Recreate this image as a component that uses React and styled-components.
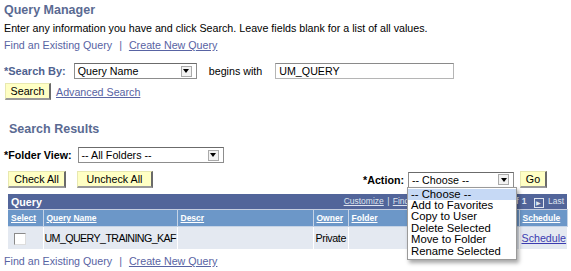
import React from "react";
import styled, { createGlobalStyle } from "styled-components";

const Global = createGlobalStyle`
  html, body { margin: 0; padding: 0; background: #fff; }
  body { font-family: "Liberation Sans", Arial, sans-serif; color: #000; }
`;

const Page = styled.div`
  width: 571px;
  height: 271px;
  overflow: hidden;
  padding: 0 0 0 4px;
  box-sizing: border-box;
  position: relative;
`;

const Title = styled.div`
  font-size: 12.5px;
  font-weight: bold;
  color: #5a6a92;
  line-height: 16px;
  margin-top: ${(p) => p.$mt || 2}px;
  padding-left: ${(p) => p.$indent || 0}px;
`;

const Text = styled.div`
  font-size: 10.7px;
  line-height: 14px;
  margin-top: 3px;
`;

const LinkRow = styled.div`
  font-size: 10.7px;
  line-height: 14px;
  margin-top: ${(p) => p.$mt}px;
  color: #5863a3;
  display: flex;
  gap: 7px;
`;

const Link = styled.span`
  color: #5863a3;
  text-decoration: ${(p) => (p.$u ? "underline" : "none")};
`;

const Row = styled.div`
  display: flex;
  align-items: center;
  margin-top: ${(p) => p.$mt}px;
  padding-left: ${(p) => p.$pl || 0}px;
  position: relative;
  z-index: ${(p) => p.$z || 0};
`;

const Label = styled.span`
  font-size: ${(p) => p.$size || 10.7}px;
  font-weight: bold;
  color: ${(p) => p.$color || "#000"};
  margin-right: ${(p) => p.$mr}px;
`;

const Select = styled.div`
  width: ${(p) => p.$w}px;
  height: 14px;
  border: 1px solid #8d8d8d;
  border-top-color: #6b6b6b;
  background: #fff;
  box-sizing: content-box;
  display: flex;
  align-items: center;
  font-size: 10.7px;
  padding-left: 3px;
  position: relative;
`;

const SelectText = styled.span`
  flex: 1;
  line-height: 14px;
`;

const Arrow = styled.span`
  width: 9px;
  height: 9px;
  margin-right: 4px;
  border: 1px solid #aaa;
  background: #f2f2f2;
  display: flex;
  align-items: center;
  justify-content: center;
  &::after {
    content: "";
    border-left: 3px solid transparent;
    border-right: 3px solid transparent;
    border-top: 4px solid #000;
  }
`;

const Plain = styled.span`
  font-size: 10.7px;
  margin: 0 ${(p) => p.$mr}px 0 ${(p) => p.$ml}px;
`;

const Input = styled.div`
  width: 174px;
  height: 14px;
  border: 1px solid #b5b5b5;
  border-top-color: #8a8a8a;
  font-size: 10.7px;
  line-height: 14px;
  padding-left: 3px;
`;

const Button = styled.div`
  width: ${(p) => p.$w}px;
  height: 14px;
  background: #ffffc4;
  border: 1px solid #e8e8b0;
  border-right: 2px solid #6a6a6a;
  border-bottom: 2px solid #9a9a9a;
  font-size: 10.7px;
  line-height: 14px;
  text-align: center;
  margin-right: ${(p) => p.$mr || 0}px;
  margin-left: ${(p) => p.$ml || 0}px;
`;

const Spacer = styled.div`
  flex: 1;
`;

const ActionWrap = styled.div`
  position: relative;
`;

const Dropdown = styled.div`
  position: absolute;
  left: -1px;
  top: 15px;
  width: 108px;
  background: #fff;
  border: 1px solid #9a9a9a;
  box-shadow: 2px 3px 4px rgba(0, 0, 0, 0.35);
  z-index: 5;
  padding: 1px 0 2px;
`;

const Option = styled.div`
  font-size: 11.3px;
  line-height: 11.4px;
  padding-left: 3px;
  background: ${(p) => (p.$sel ? "#c6d9f5" : "transparent")};
`;

const Table = styled.table`
  margin-top: 6px;
  margin-left: 4px;
  width: 559px;
  border-collapse: collapse;
  table-layout: fixed;
  font-size: 10.7px;
`;

const TitleCell = styled.td`
  background: #52659a;
  color: #fff;
  font-weight: bold;
  font-size: 10.7px;
  height: 15px;
  padding: 0 3px;
  border-bottom: 1px solid #c5cde0;
`;

const NavText = styled.span`
  float: right;
  font-size: 8.5px;
  font-weight: normal;
  color: #dfe4ef;
  word-spacing: 1px;
`;

const NavLink = styled.span`
  text-decoration: underline;
`;

const NavIcon = styled.span`
  display: inline-block;
  width: 8px;
  height: 8px;
  border: 1px solid #dfe4ef;
  margin: 0 4px;
  vertical-align: -1px;
  font-size: 6px;
  line-height: 8px;
  text-align: center;
`;

const Th = styled.th`
  background: #6c97c8;
  color: #fff;
  font-size: 8.5px;
  font-weight: bold;
  text-align: left;
  text-decoration: underline;
  height: 16px;
  padding: 0 3px;
  border-right: 1px solid #c5d3e6;
  border-bottom: 1px solid #c5d3e6;
  white-space: nowrap;
  overflow: hidden;
`;

const Td = styled.td`
  background: #e4e9f1;
  height: 22px;
  padding: 0 ${(p) => p.$pad ?? 3}px;
  font-size: 10.7px;
  letter-spacing: ${(p) => p.$ls || 0}px;
  border-right: 1px solid #fff;
  white-space: nowrap;
  overflow: hidden;
  color: ${(p) => p.$color || "#000"};
`;

const Check = styled.span`
  display: inline-block;
  width: 10px;
  height: 10px;
  margin-left: 3px;
  border: 1px solid #8a8a8a;
  border-right-color: #ddd;
  border-bottom-color: #ddd;
  background: #fff;
  vertical-align: middle;
`;

export default function App() {
  return (
    <>
      <Global />
      <Page>
        <Title>Query Manager</Title>
        <Text>Enter any information you have and click Search. Leave fields blank for a list of all values.</Text>
        <LinkRow $mt={3}>
          <Link>Find an Existing Query</Link>
          <span>|</span>
          <Link $u>Create New Query</Link>
        </LinkRow>
        <Row $mt={11}>
          <Label $size={11} $color="#4f628f" $mr={8}>*Search By:</Label>
          <Select $w={118}>
            <SelectText>Query Name</SelectText>
            <Arrow />
          </Select>
          <Plain $ml={12} $mr={13}>begins with</Plain>
          <Input>UM_QUERY</Input>
        </Row>
        <Row $mt={4} $pl={1}>
          <Button $w={43}>Search</Button>
          <Plain $ml={5} $mr={0}>
            <Link $u>Advanced Search</Link>
          </Plain>
        </Row>
        <Title $indent={5} $mt={21}>Search Results</Title>
        <Row $mt={10}>
          <Label $mr={6}>*Folder View:</Label>
          <Select $w={141}>
            <SelectText>-- All Folders --</SelectText>
            <Arrow />
          </Select>
        </Row>
        <Row $mt={8} $pl={4} $z={3}>
          <Button $w={55} $mr={11}>Check All</Button>
          <Button $w={73}>Uncheck All</Button>
          <Spacer />
          <Label $mr={4}>*Action:</Label>
          <ActionWrap>
            <Select $w={101}>
              <SelectText>-- Choose --</SelectText>
              <Arrow />
            </Select>
            <Dropdown>
              <Option $sel>-- Choose --</Option>
              <Option>Add to Favorites</Option>
              <Option>Copy to User</Option>
              <Option>Delete Selected</Option>
              <Option>Move to Folder</Option>
              <Option>Rename Selected</Option>
            </Dropdown>
          </ActionWrap>
          <Button $w={24} $ml={6} $mr={24}>Go</Button>
        </Row>
        <Table>
          <colgroup>
            <col style={{ width: 35 }} />
            <col style={{ width: 134 }} />
            <col style={{ width: 136 }} />
            <col style={{ width: 35 }} />
            <col style={{ width: 83 }} />
            <col style={{ width: 44 }} />
            <col style={{ width: 44 }} />
            <col style={{ width: 48 }} />
          </colgroup>
          <tbody>
            <tr>
              <TitleCell colSpan={8}>
                Query
                <NavText>
                  <NavLink>Customize</NavLink> | <NavLink>Find</NavLink> | <NavLink>View All</NavLink> |
                  &nbsp;&nbsp;First <NavIcon>◀</NavIcon><b>1 of 1</b> <NavIcon>▶</NavIcon>Last
                </NavText>
              </TitleCell>
            </tr>
            <tr>
              <Th>Select</Th>
              <Th>Query Name</Th>
              <Th>Descr</Th>
              <Th>Owner</Th>
              <Th>Folder</Th>
              <Th>HTML</Th>
              <Th>Excel</Th>
              <Th>Schedule</Th>
            </tr>
            <tr>
              <Td><Check /></Td>
              <Td $pad={1} $ls={-0.6}>UM_QUERY_TRAINING_KAF</Td>
              <Td></Td>
              <Td $pad={2} $ls={-0.4}>Private</Td>
              <Td></Td>
              <Td $color="#3b3cb0"><u>HTML</u></Td>
              <Td $color="#3b3cb0"><u>Excel</u></Td>
              <Td $color="#3b3cb0" $pad={2}><u>Schedule</u></Td>
            </tr>
          </tbody>
        </Table>
        <LinkRow $mt={5}>
          <Link>Find an Existing Query</Link>
          <span>|</span>
          <Link $u>Create New Query</Link>
        </LinkRow>
      </Page>
    </>
  );
}
